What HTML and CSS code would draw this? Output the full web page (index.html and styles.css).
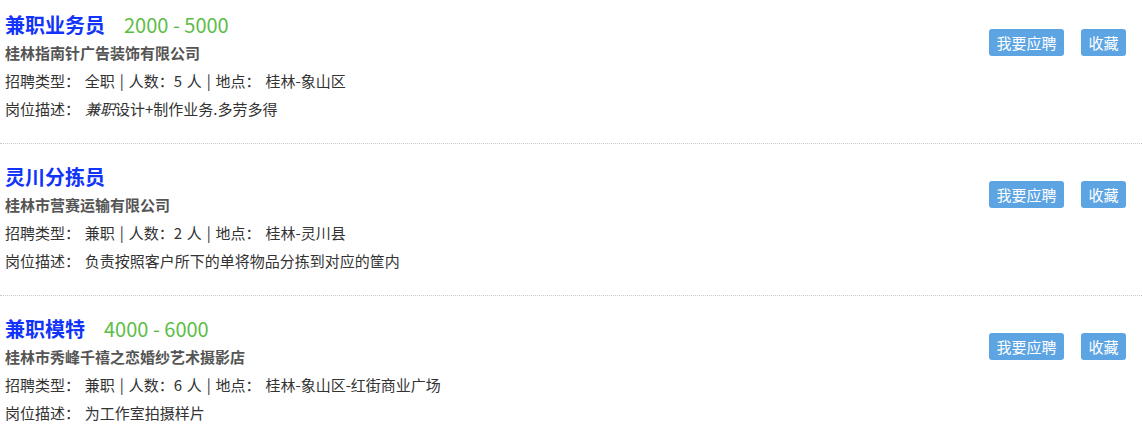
FILE: index.html
```html
<!DOCTYPE html>
<html lang="zh-CN">
<head>
  <meta charset="UTF-8" />
  <title>招聘信息</title>
  <link rel="stylesheet" href="styles.css">
</head>
<body>
  <div class="job-list">
    <div class="job">
      <div class="job-info">
        <div class="job-title">兼职业务员<span class="salary">2000 - 5000</span></div>
        <div class="company">桂林指南针广告装饰有限公司</div>
        <div class="line">招聘类型： 全职 | 人数：5 人 | 地点： 桂林-象山区</div>
        <div class="line">岗位描述： <em>兼职</em>设计+制作业务.多劳多得</div>
      </div>
      <div class="job-actions">
        <button class="button">我要应聘</button>
        <button class="button">收藏</button>
      </div>
    </div>

    <div class="job">
      <div class="job-info">
        <div class="job-title">灵川分拣员</div>
        <div class="company">桂林市营赛运输有限公司</div>
        <div class="line">招聘类型： 兼职 | 人数：2 人 | 地点： 桂林-灵川县</div>
        <div class="line">岗位描述： 负责按照客户所下的单将物品分拣到对应的筐内</div>
      </div>
      <div class="job-actions">
        <button class="button">我要应聘</button>
        <button class="button">收藏</button>
      </div>
    </div>

    <div class="job">
      <div class="job-info">
        <div class="job-title">兼职模特<span class="salary">4000 - 6000</span></div>
        <div class="company">桂林市秀峰千禧之恋婚纱艺术摄影店</div>
        <div class="line">招聘类型： 兼职 | 人数：6 人 | 地点： 桂林-象山区-红街商业广场</div>
        <div class="line">岗位描述： 为工作室拍摄样片</div>
      </div>
      <div class="job-actions">
        <button class="button">我要应聘</button>
        <button class="button">收藏</button>
      </div>
    </div>
  </div>
</body>
</html>
```

FILE: styles.css
```css
body {
  margin: 0;
  font-family: "Microsoft YaHei", "Noto Sans CJK SC", sans-serif;
  background-color: #ffffff;
  color: #333333;
  font-size: 15px;
}
.job {
  display: flex;
  justify-content: space-between;
  align-items: flex-start;
  padding: 18px 16px 21px 5px;
  border-bottom: 1px dotted #c8c8c8;
}
.job:first-child {
  padding-top: 10px;
}
.job-title {
  font-size: 20px;
  font-weight: bold;
  line-height: 29px;
  color: #1234f8;
}
.salary {
  margin-left: 19px;
  font-weight: normal;
  color: #5cbd45;
}
.company {
  font-weight: bold;
  line-height: 28px;
  color: #555555;
}
.line {
  line-height: 28px;
  word-spacing: 1.5px;
}
.line:last-child {
  line-height: 27px;
}
.line em {
  font-style: italic;
}
.job-actions {
  display: flex;
  gap: 17px;
  margin-top: 19px;
}
.button {
  height: 27px;
  padding: 0 7.5px;
  border: none;
  border-radius: 3px;
  background-color: #5ca4e2;
  color: #ffffff;
  font-family: inherit;
  font-size: 15px;
  line-height: 27px;
  cursor: pointer;
}
.button:hover {
  opacity: 0.9;
}
```
